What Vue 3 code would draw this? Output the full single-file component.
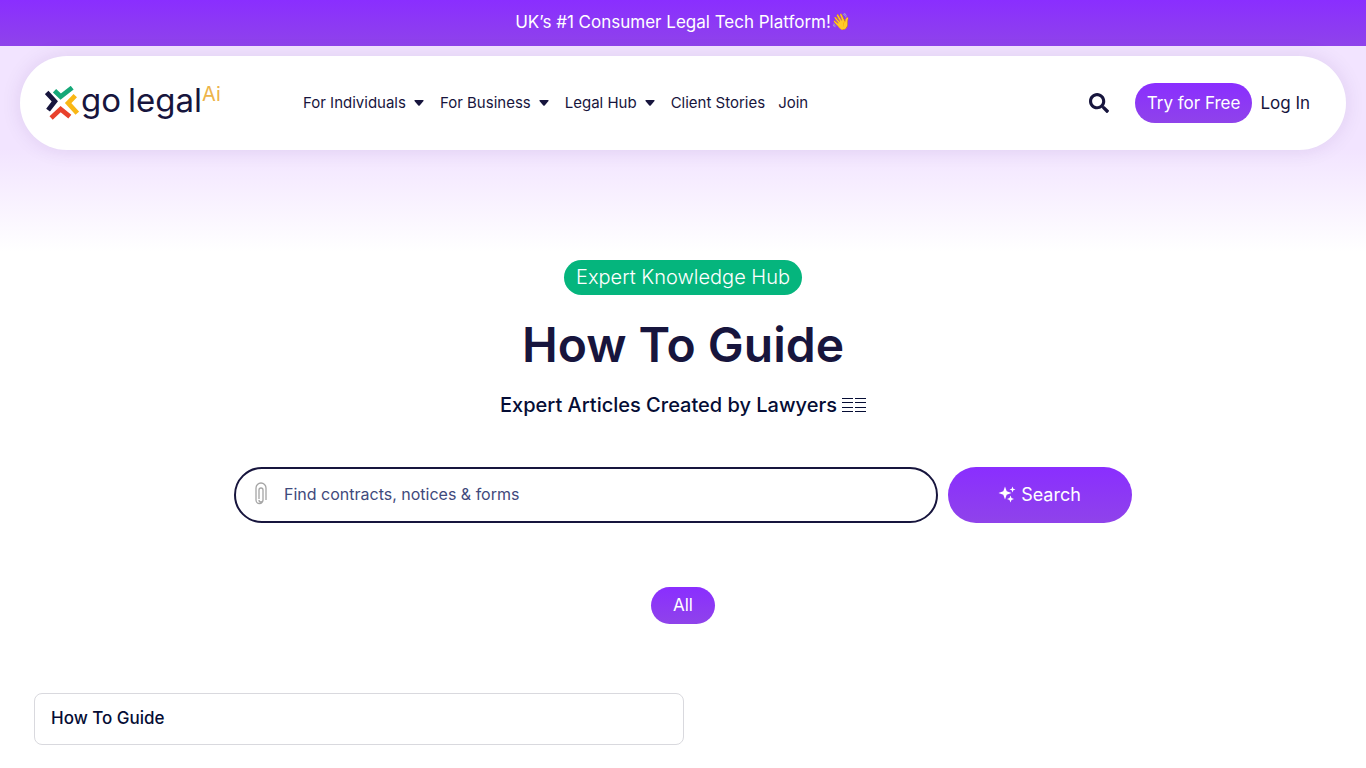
<script setup>
import { ref } from 'vue';

const query = ref('');

const menu = [
  { title: 'For Individuals', dropdown: true },
  { title: 'For Business', dropdown: true },
  { title: 'Legal Hub', dropdown: true },
  { title: 'Client Stories', dropdown: false },
  { title: 'Join', dropdown: false },
];
</script>

<template>
  <div class="page">
    <div class="announcement">UK’s #1 Consumer Legal Tech Platform!<span class="wave">👋</span></div>

    <div class="top">
      <header class="header">
        <a href="#" class="logo" aria-label="go legal Ai">
          <svg class="logo-mark" viewBox="0 0 100 100" fill="none" stroke-width="14">
            <path d="M5 19 29 45 9 71" stroke="#17153d" />
            <path d="M28 14 46 31 80 5" stroke="#15a878" />
            <path d="M89 28 68 50 95 80" stroke="#f9b715" />
            <path d="M18 94 46 68 73 90" stroke="#e8412c" />
          </svg>
          <span class="logo-name"><span>go</span> <span>legal</span></span>
          <span class="logo-ai">Ai</span>
        </a>

        <nav class="menu">
          <a v-for="item in menu" :key="item.title" href="#" class="menu-item">
            {{ item.title }}
            <svg v-if="item.dropdown" class="caret" viewBox="0 0 10 6">
              <path d="M1 0h8q1 0 .5 1L5.700 5.500q-.7.700-1.400 0L.5 1Q0 0 1 0z" />
            </svg>
          </a>
        </nav>

        <div class="actions">
          <button class="search-toggle" aria-label="Search">
            <svg viewBox="0 0 512 512">
              <path
                d="M505 442.700 405.300 343c-4.500-4.500-10.600-7-17-7H372c27.600-35.300 44-79.700 44-128C416 93.100 322.900 0 208 0S0 93.100 0 208s93.100 208 208 208c48.300 0 92.700-16.400 128-44v16.300c0 6.400 2.500 12.500 7 17l99.700 99.700c9.400 9.400 24.600 9.400 33.900 0l28.300-28.300c9.400-9.400 9.400-24.600.1-34zM208 336c-70.700 0-128-57.200-128-128 0-70.700 57.200-128 128-128 70.700 0 128 57.200 128 128 0 70.700-57.200 128-128 128z"
              />
            </svg>
          </button>
          <a href="#" class="try">Try for Free</a>
          <a href="#" class="login">Log In</a>
        </div>
      </header>
    </div>

    <main>
      <section class="hero">
        <span class="badge">Expert Knowledge Hub</span>
        <h1>How To Guide</h1>
        <h2>
          Expert Articles Created by Lawyers
          <svg class="bars" viewBox="0 0 24 16">
            <path d="M0 1.500h11M13 1.500h11M0 5.500h11M13 5.500h11M0 10.500h11M13 10.500h11M0 14.500h11M13 14.500h11" />
          </svg>
        </h2>

        <form class="search" @submit.prevent>
          <label class="search-box">
            <svg class="clip" viewBox="0 0 14 24">
              <path d="M5 17V8a2 2 0 0 1 4 0v10a2 2 0 0 1-4 0M9 18a3.500 3.500 0 0 1-7 0V6a5 5 0 0 1 10 0v12" />
            </svg>
            <input
              v-model="query"
              type="text"
              aria-label="Find contracts, notices and forms"
              placeholder="Find contracts, notices &amp; forms"
            />
          </label>
          <button type="submit" class="search-button">
            <svg class="sparkles" viewBox="0 0 16 16">
              <path
                d="M6 .5 7.700 5.300 12.500 7 7.700 8.700 6 13.500 4.300 8.700-.5 7 4.300 5.300zM13.500.5l.8 2.200 2.200.8-2.200.8-.8 2.200-.8-2.200-2.200-.8 2.200-.8zM11.500 9.500l1 2.500 2.500 1-2.500 1-1 2.500-1-2.500-2.500-1 2.500-1z"
              />
            </svg>
            Search
          </button>
        </form>

        <button class="filter">All</button>
      </section>

      <section class="guides">
        <a href="#" class="guide">How To Guide</a>
      </section>
    </main>
  </div>
</template>

<style>
body {
  background: #fff;
}
</style>

<style scoped>
.page {
  font-family: Inter, 'Open Sans', sans-serif;
  color: #17153d;
}

.page * {
  box-sizing: border-box;
}

a {
  color: inherit;
  text-decoration: none;
}

button {
  padding: 0;
  border: 0;
  font-family: inherit;
  cursor: pointer;
}

.announcement {
  display: flex;
  justify-content: center;
  align-items: center;
  height: 46px;
  padding-bottom: 2px;
  color: #fff;
  font-size: 17px;
  line-height: 24px;
  background: linear-gradient(#8a2eff, #8f43ea);
}

.wave {
  font-family: 'Noto Color Emoji', sans-serif;
  font-size: 16px;
}

.top {
  height: 214px;
  padding: 10px 20px;
  background: linear-gradient(#f2e4ff 0%, #f2e4ff 48%, #fff 96%);
}

.header {
  display: flex;
  align-items: center;
  height: 94px;
  padding: 0 36px 0 25px;
  border-radius: 47px;
  background: #fff;
  box-shadow: 0 0 20px rgb(60 20 110 / 10%);
}

.logo {
  display: flex;
  align-items: center;
  flex: none;
  width: 258px;
}

.logo-mark {
  width: 34px;
  height: 34px;
  margin-right: 2px;
}

.logo-name {
  display: flex;
  gap: 7px;
  padding-bottom: 6px;
  font-size: 33px;
  font-weight: 400;
  line-height: 36px;
}

.logo-ai {
  align-self: flex-start;
  padding-top: 2px;
  color: #edb44a;
  font-size: 20px;
  line-height: 20px;
}

.menu {
  display: flex;
  flex: none;
  gap: 13px;
  font-size: 15px;
  line-height: 24px;
  white-space: nowrap;
}

.menu-item {
  display: flex;
  align-items: center;
  gap: 8px;
}

.caret {
  width: 10px;
  height: 6px;
  margin-right: 3px;
  fill: currentcolor;
}

.actions {
  display: flex;
  align-items: center;
  margin-left: auto;
  font-size: 17px;
  white-space: nowrap;
}

.search-toggle {
  display: flex;
  margin-right: 26px;
  background: none;
}

.search-toggle svg {
  width: 20px;
  height: 20px;
  fill: #17153d;
}

.try {
  padding: 0 12px;
  border-radius: 20px;
  color: #fff;
  line-height: 40px;
  background: linear-gradient(#8a2eff, #8f43ea);
}

.login {
  margin-left: 8px;
}

.hero {
  display: flex;
  flex-direction: column;
  align-items: center;
}

.badge {
  padding: 0 12px;
  border-radius: 18px;
  color: #fff;
  font-size: 20px;
  font-weight: 300;
  line-height: 35px;
  background: #05b57d;
}

h1 {
  margin: 20px 0 0;
  font-size: 48px;
  font-weight: 600;
  line-height: 60px;
}

h2 {
  display: flex;
  align-items: center;
  gap: 5px;
  margin: 16px 0 0;
  color: #050d35;
  font-size: 20px;
  font-weight: 500;
  line-height: 28px;
}

.bars {
  width: 24px;
  height: 16px;
  stroke: currentcolor;
}

.search {
  display: flex;
  gap: 10px;
  width: 100%;
  max-width: 898px;
  margin-top: 48px;
}

.search-box {
  display: flex;
  flex: 1;
  align-items: center;
  gap: 16px;
  height: 56px;
  padding: 0 18px 2px;
  border: 2px solid #17153d;
  border-radius: 28px;
}

.clip {
  width: 14px;
  height: 24px;
  fill: none;
  stroke: #a5a5a5;
  stroke-width: 1.3;
}

.search-box input {
  flex: 1;
  padding: 0;
  border: 0;
  outline: 0;
  color: #17153d;
  font-family: inherit;
  font-size: 16px;
  background: none;
}

.search-box input::placeholder {
  color: #3f4a7c;
  opacity: 1;
}

.search-button {
  display: flex;
  justify-content: center;
  align-items: center;
  gap: 6px;
  width: 184px;
  padding-bottom: 2px;
  border-radius: 28px;
  color: #fff;
  font-size: 18px;
  background: linear-gradient(#8a2eff, #8f43ea);
}

.sparkles {
  width: 16px;
  height: 16px;
  fill: currentcolor;
  overflow: visible;
}

.filter {
  width: 64px;
  height: 37px;
  margin-top: 64px;
  padding-bottom: 2px;
  border-radius: 19px;
  color: #fff;
  font-size: 17px;
  background: linear-gradient(#8a2eff, #8f43ea);
}

.guides {
  display: grid;
  grid-template-columns: 1fr 1fr;
  padding: 69px 33px 23px 34px;
}

.guide {
  padding: 0 16px 2px;
  border: 1px solid #d9d9de;
  border-radius: 8px;
  color: #050d35;
  font-size: 17px;
  font-weight: 500;
  line-height: 48px;
}
</style>
